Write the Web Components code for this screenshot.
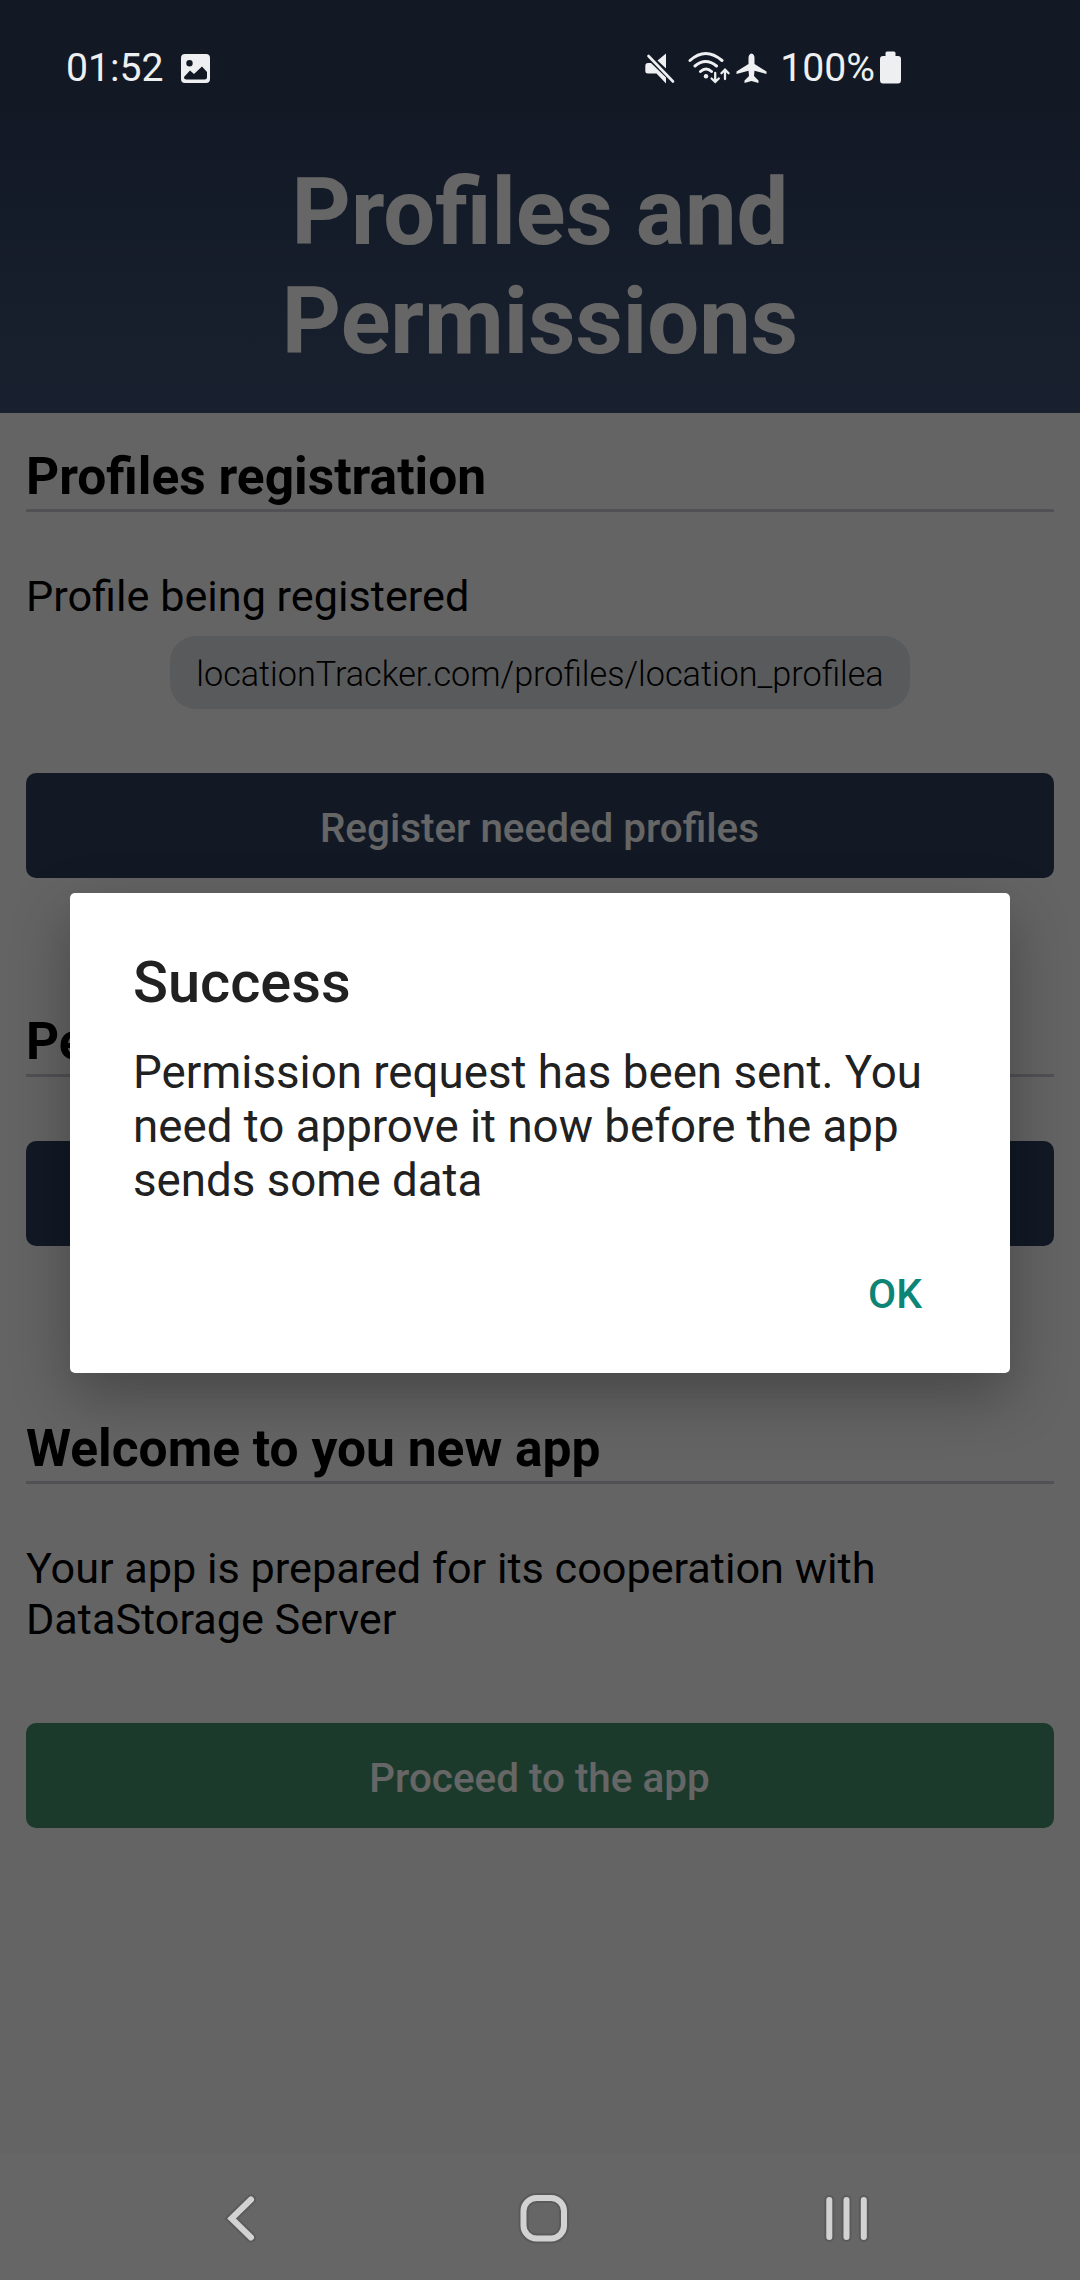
<!DOCTYPE html>
<html lang="en">
<head>
<meta charset="utf-8">
<title>Profiles and Permissions</title>
<style>
html,body{margin:0;padding:0}
body{width:1080px;height:2280px;overflow:hidden;position:relative;font-family:Roboto,"Liberation Sans",sans-serif;background:#fafafa}
</style>
</head>
<body>
<app-screen>
  <app-header slot="header">Profiles and<br>Permissions</app-header>
  <app-section heading="Profiles registration" style="--top:33px">
    <app-text style="--top:59px">Profile being registered</app-text>
    <app-chip>locationTracker.com/profiles/location_profilea</app-chip>
    <app-button style="--top:64px">Register needed profiles</app-button>
  </app-section>
  <app-section heading="Pe" style="--top:133px">
    <app-button style="--top:64px"></app-button>
  </app-section>
  <app-section heading="Welcome to you new app" style="--top:172px">
    <app-text style="--top:59px">Your app is prepared for its cooperation with<br>DataStorage Server</app-text>
    <app-button style="--top:78px;--fill:#46916b">Proceed to the app</app-button>
  </app-section>
</app-screen>
<modal-layer>
  <alert-dialog heading="Success" action="OK">Permission request has been sent. You<br>need to approve it now before the app<br>sends some data</alert-dialog>
</modal-layer>
<status-bar></status-bar>
<nav-bar></nav-bar>
<script>
const define = (name, html) => customElements.define(name, class extends HTMLElement {
  constructor() {
    super();
    const t = document.createElement('template');
    t.innerHTML = html.replace(/\{(\w+)\}/g, (_, k) => this.getAttribute(k) || '');
    this.attachShadow({mode: 'open'}).append(t.content.cloneNode(true));
  }
});

define('app-screen', `<style>
:host{display:flex;flex-direction:column;width:1080px;height:2280px;background:#fafafa}
main{flex:1;padding:0 26px}
footer{height:126px;background:#fff}
</style><slot name="header"></slot><main><slot></slot></main><footer></footer>`);

define('app-header', `<style>
:host{display:block;box-sizing:border-box;height:413px;padding-top:158px;background:linear-gradient(#2f3f5d 0,#2f3f5d 110px,#3f5377 413px)}
h1{margin:0;text-align:center;color:#fff;font-size:92.1px;line-height:109px;font-weight:700}
</style><h1><slot></slot></h1>`);

define('app-section', `<style>
:host{display:flex;flex-direction:column;padding-top:var(--top,0)}
h2{margin:0;padding-bottom:1px;border-bottom:3px solid #cbc8d2;color:#000;font-size:51.5px;line-height:62px;font-weight:700;white-space:nowrap}
</style><h2>{heading}</h2><slot></slot>`);

define('app-text', `<style>
:host{display:block;margin-top:var(--top,0);color:#000;font-size:43.2px;line-height:51px;white-space:nowrap}
</style><slot></slot>`);

define('app-chip', `<style>
:host{display:flex;align-items:center;justify-content:center;align-self:center;box-sizing:border-box;width:740px;height:73px;margin-top:14px;padding-top:3px;border-radius:26px;background:#dfe1e4;color:#000;font-size:34.2px;font-weight:300;white-space:nowrap}
</style><slot></slot>`);

define('app-button', `<style>
:host{display:block;margin-top:var(--top,0)}
button{display:flex;align-items:center;justify-content:center;width:100%;height:105px;margin:0;padding:6px 1px 0 0;border:0;border-radius:10px;background:var(--fill,#2d405e);color:#fff;font:500 40.4px/48px Roboto,sans-serif}
</style><button><slot></slot></button>`);

define('modal-layer', `<style>
:host{position:absolute;inset:0;display:flex;flex-direction:column;align-items:center;padding-top:893px;background:rgba(0,0,0,.6)}
</style><slot></slot>`);

define('alert-dialog', `<style>
:host{display:flex;flex-direction:column;box-sizing:border-box;width:940px;height:480px;padding:56px 63px 0;border-radius:5px;background:#fff;color:#212121;box-shadow:0 22px 60px rgba(0,0,0,.3)}
h3{margin:0;font-size:57.75px;line-height:67px;font-weight:500}
p{margin:30px 0 0;font-size:45.7px;line-height:54px;white-space:nowrap}
.row{display:flex;justify-content:flex-end;margin-top:62px;padding-right:25px}
button{margin:0;padding:0;border:0;background:none;color:#0c8577;font:500 40.8px/48px Roboto,sans-serif}
</style><h3>{heading}</h3><p><slot></slot></p><div class="row"><button>{action}</button></div>`);

define('status-bar', `<style>
:host{position:absolute;top:0;left:0;display:flex;align-items:flex-start;justify-content:space-between;box-sizing:border-box;width:1080px;height:92px;padding:45px 177px 0 66px;color:#eeeff1;font-size:39.2px;line-height:46px}
div{display:flex}
svg{display:block;margin-top:5px;fill:#eeeff1;flex:none}
</style>
<div><span>01:52</span>
<svg style="margin-left:16px" width="31" height="36" viewBox="0 0 31 36"><path fill-rule="evenodd" d="M5 4H26Q30 4 30 8V29Q30 33 26 33H5Q1 33 1 29V8Q1 4 5 4ZM9.500 10A3.200 3.200 0 1 0 9.500 16.400A3.200 3.200 0 1 0 9.500 10ZM4 27L10 20.500L14 24L22 16.500L27 22V27Q27 29.500 24.500 29.500H6.500Q4 29.500 4 27Z"/></svg></div>
<div>
<svg width="136" height="38" viewBox="645 50 136 38">
<path d="M667 53.500V68.500L658.500 60.500ZM649 63H652L667 77.500V83.500L657.500 73.500H649Q646.300 73.500 646.300 71V66Q646.300 63 649 63Z"/>
<path d="M649.500 56L674 81.500" stroke="#eeeff1" stroke-width="2.600" stroke-linecap="round"/>
<g fill="none" stroke="#eeeff1" stroke-width="3" stroke-linecap="round"><path d="M691 60.500Q706.500 46.500 723 60.500M696 66Q706.500 57 717.500 66M701.500 71.500Q707 66.500 712.500 71.500"/><path stroke-width="2.300" d="M716.200 73V81M712.600 78.500L716.200 82L719.800 78.500M726 79V70M722.400 73.200L726 69.700L729.600 73.200"/></g><circle cx="707" cy="76.300" r="2.200"/>
<path d="M752.500 53.500Q755.500 54 755.500 58V64L767.500 71.500V74L755.500 70.700L755 76L759.500 80.500V83L752.500 81L745.500 83V80.500L750 76L749.500 70.700L737.500 74V71.500L749.500 64V58Q749.500 54 752.500 53.500Z"/></svg>
<span>100%</span>
<svg style="margin-left:4px" width="24" height="38" viewBox="879 50 24 38"><path d="M887 51.500H894Q895.500 51.500 895.500 53V56H898Q901 56 901 59V80Q901 83.500 898 83.500H883Q880 83.500 880 80V59Q880 56 883 56H885.500V53Q885.500 51.500 887 51.500Z"/></svg>
</div>`);

define('nav-bar', `<style>
:host{position:absolute;left:0;bottom:0;width:1080px;height:126px;display:flex;align-items:center}
svg{fill:none;stroke-linecap:round;stroke-linejoin:miter}
.halo{stroke:#5a5a5a;stroke-width:10}
.ink{stroke:#d2d2d2;stroke-width:6}
</style><svg width="1080" height="126" viewBox="0 2154 1080 126"><defs><g id="i"><path d="M251 2199.500L231.500 2218.500L251 2237.500"/><rect x="523.500" y="2198" width="40.500" height="40.500" rx="13"/><path d="M829.300 2200V2237M846.500 2200V2237M863.800 2200V2237"/></g></defs><use href="#i" class="halo"/><use href="#i" class="ink"/></svg>`);
</script>
</body>
</html>
